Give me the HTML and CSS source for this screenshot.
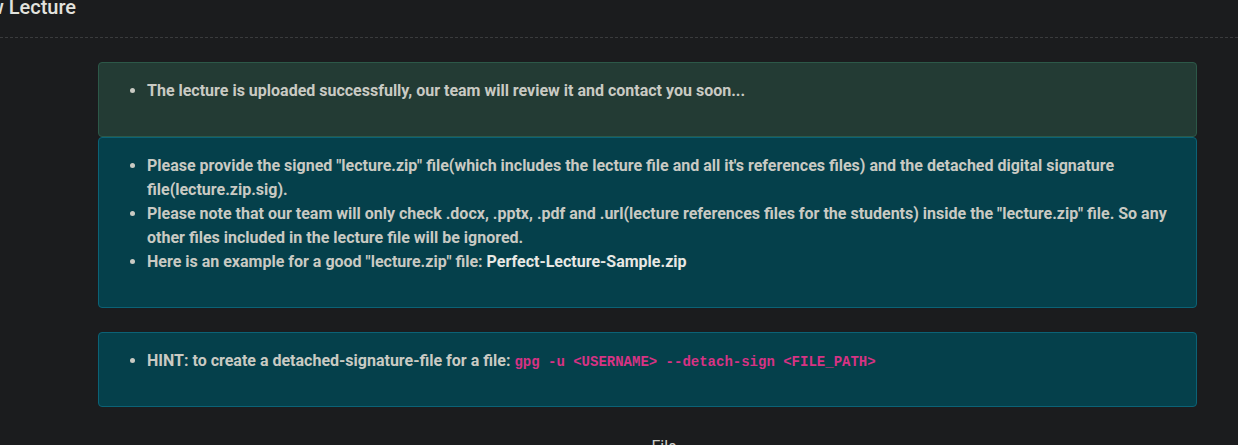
FILE: index.html
```html
<!DOCTYPE html>
<html>
<head>
<meta charset="utf-8">
<link rel="stylesheet" href="styles.css">
</head>
<body>
<header class="page-head">
  <h1 class="title">New Lecture</h1>
</header>
<main class="content">
  <div class="alert alert-success">
    <ul>
      <li>The lecture is uploaded successfully, our team will review it and contact you soon...</li>
    </ul>
  </div>
  <div class="alert alert-info">
    <ul>
      <li>Please provide the signed "lecture.zip" file(which includes the lecture file and all it's references files) and the detached digital signature file(lecture.zip.sig).</li>
      <li>Please note that our team will only check .docx, .pptx, .pdf and .url(lecture references files for the students) inside the "lecture.zip" file. So any other files included in the lecture file will be ignored.</li>
      <li>Here is an example for a good "lecture.zip" file: <a class="link" href="#">Perfect-Lecture-Sample.zip</a></li>
    </ul>
  </div>
  <div class="alert alert-info hint">
    <ul>
      <li>HINT: to create a detached-signature-file for a file: <code>gpg -u &lt;USERNAME&gt; --detach-sign &lt;FILE_PATH&gt;</code></li>
    </ul>
  </div>
  <div class="field">
    <label class="field-label">File</label>
  </div>
</main>
</body>
</html>
```
FILE: styles.css
```css
html, body {
  margin: 0;
  padding: 0;
  background: #1b1c1e;
  font-family: Roboto, "Liberation Sans", sans-serif;
  color: #c9cac3;
  overflow: hidden;
}
.page-head {
  box-sizing: border-box;
  height: 38px;
  border-bottom: 1px dashed #3a3b3d;
}
.title {
  margin: 0 0 0 -36px;
  font-size: 20px;
  font-weight: 500;
  line-height: 14px;
  color: #e2e2de;
}
.content {
  padding: 24px 41px 0 98px;
}
.alert {
  border: 1px solid;
  border-radius: 4px;
  padding: 16px 16px 17px;
  font-size: 16px;
  font-weight: 700;
  line-height: 24px;
}
.alert ul {
  margin: 0 0 16px 0;
  padding-left: 32px;
}
.alert-success {
  background: #233b34;
  border-color: #2c5848;
}
.alert-info {
  background: #05404b;
  border-color: #0b6276;
}
.hint {
  margin-top: 24px;
  padding-bottom: 16px;
}
.link {
  color: #e8e8e4;
  text-decoration: none;
}
code {
  font-family: "Liberation Mono", monospace;
  font-size: 14px;
  font-weight: 700;
  color: #d63384;
}
.field {
  margin-top: 30px;
  text-align: center;
}
.field-label {
  font-size: 16px;
  color: #cfcfcb;
  padding-left: 33px;
}
```
